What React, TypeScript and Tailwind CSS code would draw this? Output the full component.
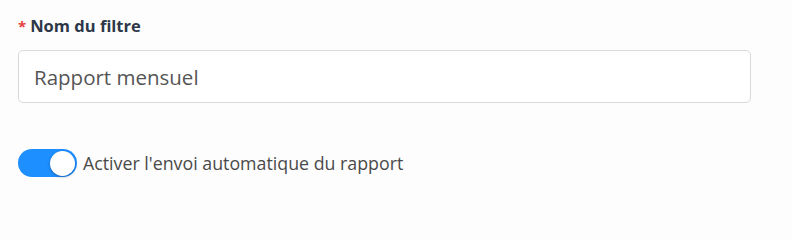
import { useState } from "react";

const App = () => {
    const [name, setName] = useState("Rapport mensuel");
    const [enabled, setEnabled] = useState(true);

    return (
        <div className="min-h-screen w-full bg-[#fdfdfd] font-['Open_Sans',sans-serif]">
            <div className="pl-[18px] pr-[41px] pt-[14px]">
                {/* Label */}
                <label className="flex items-center h-[24px] text-[16.5px] font-bold text-[#2d3748]">
                    <span className="text-[#e53e3e] mr-[4px] text-[15px]">*</span>
                    Nom du filtre
                </label>

                {/* Input */}
                <input
                    type="text"
                    value={name}
                    onChange={(e) => setName(e.target.value)}
                    className="mt-[12px] w-full h-[53px] px-[15px] border border-[#d9d9d9] rounded-[5px] bg-white text-[20.5px] text-[#555] outline-none"
                />

                {/* Toggle */}
                <div className="mt-[46px] flex items-center gap-[6px]">
                    <button
                        type="button"
                        onClick={() => setEnabled(!enabled)}
                        className={
                            enabled
                                ? "relative w-[59px] h-[28px] rounded-full bg-[#1e8fff] flex items-center justify-end px-[2px]"
                                : "relative w-[59px] h-[28px] rounded-full bg-[#bfbfbf] flex items-center justify-start px-[2px]"
                        }
                    >
                        <span className="block w-[25px] h-[25px] rounded-full bg-white shadow-[0_1px_3px_rgba(0,0,0,0.3)]" />
                    </button>
                    <span className="text-[17.8px] text-[#4a4a4a]">Activer l'envoi automatique du rapport</span>
                </div>
            </div>
        </div>
    );
};

export default App;
